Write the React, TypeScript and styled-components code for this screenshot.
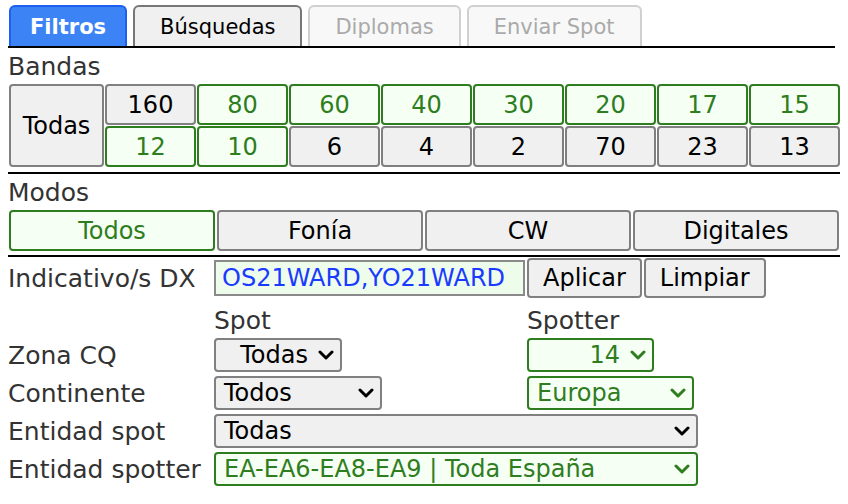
import React from 'react'
import styled, { createGlobalStyle, css } from 'styled-components'

const GlobalStyle = createGlobalStyle`
    body {
        margin: 4px 8px 8px;
        background: #fff;
        font-family: 'DejaVu Sans', 'Open Sans', sans-serif;
        color: #333;
        overflow: hidden;
    }
`

const green = '#2e7d1e'
const greenBg = '#f6fff3'

// Tabs
const TabBar = styled.nav`
    display: flex;
    gap: 6px;
    width: 826px;
    padding: 1px 0 0 1px;
    border-bottom: 2px solid #000;
    height: 41px;
`

const Tab = styled.div<{ variant: 'active' | 'normal' | 'disabled' }>`
    display: flex;
    align-items: center;
    justify-content: center;
    padding: 0 25px;
    font-size: 21px;
    border-radius: 6px 6px 0 0;
    border: 2px solid #777;
    border-bottom: none;
    background: #f0f0f0;
    color: #000;

    ${({ variant }) =>
        variant === 'active' &&
        css`
            padding: 0 19px;
            background: #3c83f6;
            border-color: #1d5ff0;
            color: #fff;
            font-weight: bold;
        `}

    ${({ variant }) =>
        variant === 'disabled' &&
        css`
            background: #f8f8f8;
            border-color: #d0d0d0;
            color: #aaa;
        `}
`

const SectionTitle = styled.div`
    font-size: 25px;
    height: 36px;
    line-height: 38px;
`

const Rule = styled.div`
    height: 2px;
    background: #000;
    width: calc(100% + 8px);
`

// Buttons shared by bands, modes and actions
const Btn = styled.div<{ on?: boolean }>`
    display: flex;
    align-items: center;
    justify-content: center;
    box-sizing: border-box;
    border: 2px solid #808080;
    border-radius: 4px;
    background: #f0f0f0;
    color: #000;
    font-size: 24px;

    ${({ on }) =>
        on &&
        css`
            border-color: ${green};
            background: ${greenBg};
            color: ${green};
        `}
`

const BandGrid = styled.div`
    display: grid;
    grid-template-columns: 95px repeat(8, 91px);
    grid-template-rows: 41px 41px;
    gap: 1px;
    margin-left: 1px;
    margin-bottom: 5px;
`

const AllBands = styled(Btn)`
    grid-row: 1 / span 2;
    height: 83px;
`

const ModeRow = styled.div`
    display: grid;
    grid-template-columns: repeat(4, 206px);
    gap: 2px;
    height: 41px;
    margin-left: 1px;
    margin-bottom: 4px;
`

// Form area
const Form = styled.div`
    display: grid;
    grid-template-columns: 206px 313px auto;
    grid-auto-rows: 38px;
    align-items: center;
`

const Label = styled.div`
    font-size: 25px;
    color: #333;
    white-space: nowrap;
`

const CallRow = styled.div`
    display: flex;
    align-items: center;
    height: 40px;
    padding-top: 1px;
`

const CallLabel = styled(Label)`
    width: 206px;
    flex-shrink: 0;
`

const CallInput = styled.div`
    box-sizing: border-box;
    width: 311px;
    height: 36px;
    border: 2px solid #8a8a8a;
    background: #eefcec;
    color: #1a3bff;
    font-size: 24px;
    display: flex;
    align-items: center;
    padding-left: 6px;
    white-space: nowrap;
    overflow: hidden;
`

const ActionBtn = styled(Btn)`
    height: 40px;
    padding: 0 14px;
    margin-left: 2px;
`

const Head = styled(Label)`
    align-self: end;
    line-height: 30px;
`

const Select = styled.div<{ on?: boolean; w: number; right?: boolean; span?: boolean }>`
    box-sizing: border-box;
    width: ${({ w }) => w}px;
    height: 34px;
    border: 2px solid #808080;
    border-radius: 4px;
    background: #f0f0f0;
    color: #000;
    font-size: 24px;
    display: flex;
    align-items: center;
    justify-content: ${({ right }) => (right ? 'flex-end' : 'space-between')};
    gap: 10px;
    padding: 0 6px 0 8px;
    white-space: nowrap;
    ${({ span }) => span && 'grid-column: 2 / span 2;'}

    ${({ on }) =>
        on &&
        css`
            border-color: ${green};
            background: ${greenBg};
            color: ${green};
        `}
`

const Chevron = () => (
    <svg width="16" height="10" viewBox="0 0 16 10">
        <path d="M2 2 L8 8 L14 2" fill="none" stroke="currentColor" strokeWidth="3" strokeLinecap="round" strokeLinejoin="round" />
    </svg>
)

const bandsTop = [
    { n: '160', on: false },
    { n: '80', on: true },
    { n: '60', on: true },
    { n: '40', on: true },
    { n: '30', on: true },
    { n: '20', on: true },
    { n: '17', on: true },
    { n: '15', on: true },
]

const bandsBottom = [
    { n: '12', on: true },
    { n: '10', on: true },
    { n: '6', on: false },
    { n: '4', on: false },
    { n: '2', on: false },
    { n: '70', on: false },
    { n: '23', on: false },
    { n: '13', on: false },
]

const App: React.FC = () => {
    return (
        <>
            <GlobalStyle />
            <TabBar>
                <Tab variant="active">Filtros</Tab>
                <Tab variant="normal">Búsquedas</Tab>
                <Tab variant="disabled">Diplomas</Tab>
                <Tab variant="disabled">Enviar Spot</Tab>
            </TabBar>

            <SectionTitle>Bandas</SectionTitle>
            <BandGrid>
                <AllBands>Todas</AllBands>
                {bandsTop.map((b) => (
                    <Btn key={b.n} on={b.on}>{b.n}</Btn>
                ))}
                {bandsBottom.map((b) => (
                    <Btn key={b.n} on={b.on}>{b.n}</Btn>
                ))}
            </BandGrid>
            <Rule />

            <SectionTitle>Modos</SectionTitle>
            <ModeRow>
                <Btn on>Todos</Btn>
                <Btn>Fonía</Btn>
                <Btn>CW</Btn>
                <Btn>Digitales</Btn>
            </ModeRow>
            <Rule />

            <CallRow>
                <CallLabel>Indicativo/s DX</CallLabel>
                <CallInput>OS21WARD,YO21WARD</CallInput>
                <ActionBtn>Aplicar</ActionBtn>
                <ActionBtn>Limpiar</ActionBtn>
            </CallRow>

            <Form>
                <div />
                <Head>Spot</Head>
                <Head>Spotter</Head>

                <Label>Zona CQ</Label>
                <Select w={128} right>Todas <Chevron /></Select>
                <Select w={127} right on>14 <Chevron /></Select>

                <Label>Continente</Label>
                <Select w={168}>Todos <Chevron /></Select>
                <Select w={167} on>Europa <Chevron /></Select>

                <Label>Entidad spot</Label>
                <Select w={484} span>Todas <Chevron /></Select>

                <Label>Entidad spotter</Label>
                <Select w={484} span on>EA-EA6-EA8-EA9 | Toda España <Chevron /></Select>
            </Form>
        </>
    )
}

export default App
